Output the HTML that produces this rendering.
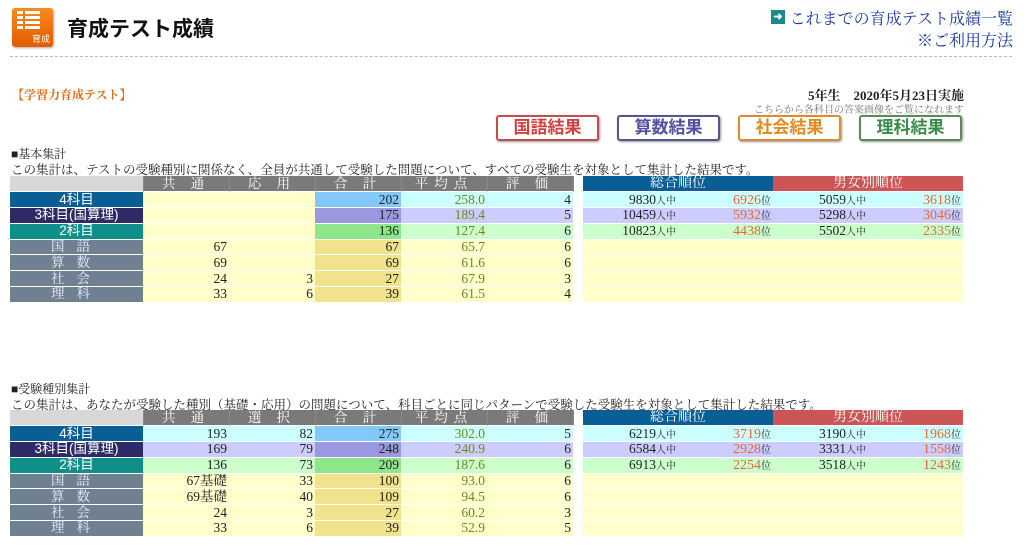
<!DOCTYPE html>
<html><head><meta charset="utf-8"><style>
*{margin:0;padding:0;box-sizing:border-box}
body{width:1024px;height:557px;background:#fff;position:relative;overflow:hidden;font-family:"Liberation Serif","Noto Serif CJK JP",serif;color:#222}
.a{position:absolute}
table{border-collapse:collapse;table-layout:fixed;position:absolute;font-size:13.5px}
td{height:15.8px;line-height:14px;padding:0 2px;white-space:nowrap;text-align:right;border-bottom:1px solid rgba(255,255,255,.5);overflow:hidden}
.h td{color:#fff;background:#7a7a7a;text-align:center;letter-spacing:6px;border-right:1px solid #8a8a8a}
.h td.e{background:#d8d8d8}
td.l{color:#fff;text-align:center;font-family:"Liberation Sans","Noto Sans CJK JP",sans-serif}
td.s{color:#eef;background:#6f8090;text-align:center;letter-spacing:12px}
.r4 td{background:#ccffff}.r4 td.l{background:#0a5e96}.r4 td.t{background:#82c8f8}
.r3 td{background:#ccccff}.r3 td.l{background:#2e2a66}.r3 td.t{background:#9a98de}
.r2 td{background:#ccffcc}.r2 td.l{background:#0f8f8a}.r2 td.t{background:#8ee68a}
.ry td{background:#ffffcc}.ry td.t{background:#f1e28c}.ry td.s{background:#6f8090}
td.g{color:#6a8a20}
.rk td{text-align:right}
.rk .h2 td{color:#fff;text-align:center;font-size:14px}
.rk .h2 td.b{background:#0a5e96}.rk .h2 td.c{background:#cc5555}
.o{color:#e06a3a;font-size:14px;line-height:12px}
small{font-size:10px;line-height:10px}
.btn{position:absolute;top:115px;width:103px;height:26px;border-radius:3px;border:2px solid;font-family:"Liberation Sans","Noto Sans CJK JP",sans-serif;font-size:17px;font-weight:bold;text-align:center;line-height:22px;background:#fff;box-shadow:1px 1px 2px #999}
</style></head><body>
<div class="a" style="left:12px;top:8px;width:41px;height:39px;background:linear-gradient(#f98a20,#e25a00);border-radius:3px;box-shadow:1px 1px 2px #aaa">
<div class="a" style="left:5px;top:3px;width:23px;height:20px;background:repeating-linear-gradient(#fff 0 3px,transparent 3px 5px)"></div>
<div class="a" style="left:11px;top:3px;width:2px;height:20px;background:#f07a10"></div>
<div class="a" style="left:20px;top:24px;color:#fff;font-size:9px;font-family:'Noto Sans CJK JP',sans-serif">育成</div></div>
<div class="a" style="left:67px;top:13px;font-size:21px;font-weight:bold;font-family:'Liberation Sans','Noto Sans CJK JP',sans-serif;color:#111">育成テスト成績</div>
<div class="a" style="left:771px;top:10px;width:14px;height:14px;background:#1a8a8a;color:#fff;font-size:11px;line-height:14px;text-align:center;font-family:sans-serif;font-weight:bold">➜</div>
<div class="a" style="right:11px;top:6px;font-size:16px;color:#1a3a9a">これまでの育成テスト成績一覧</div>
<div class="a" style="right:11px;top:28px;font-size:16px;color:#1a3a9a">※ご利用方法</div>
<div class="a" style="left:10px;top:56px;width:1002px;border-top:1px dashed #bbb"></div>
<div class="a" style="left:12px;top:86px;font-size:12px;color:#e06a10;font-weight:bold">【学習力育成テスト】</div>
<div class="a" style="right:60px;top:85px;font-size:13px;font-weight:bold">5年生　2020年5月23日実施</div>
<div class="a" style="right:60px;top:101px;font-size:10px;color:#777">こちらから各科目の答案画像をご覧になれます</div>
<div class="btn" style="left:496px;border-color:#c05050;color:#d04040">国語結果</div>
<div class="btn" style="left:617px;border-color:#555590;color:#5050a0">算数結果</div>
<div class="btn" style="left:738px;border-color:#e08a30;color:#e08a20">社会結果</div>
<div class="btn" style="left:859px;border-color:#5a8a5a;color:#3a8a4a">理科結果</div>

<div class="a" style="left:11px;top:145px;font-size:12px">■基本集計</div>
<div class="a" style="left:11px;top:160px;font-size:12.5px">この集計は、テストの受験種別に関係なく、全員が共通して受験した問題について、すべての受験生を対象として集計した結果です。</div>
<table style="left:10px;top:176px;width:563px">
<col style="width:133px"><col style="width:86px"><col style="width:86px"><col style="width:86px"><col style="width:86px"><col style="width:86px">
<tr class="h"><td class="e"></td><td>共 通</td><td>応 用</td><td>合 計</td><td>平均点</td><td>評 価</td></tr>
<tr class="r4"><td class="l">4科目</td><td style="background:#ffffcc"></td><td style="background:#ffffcc"></td><td class="t">202</td><td class="g">258.0</td><td>4</td></tr>
<tr class="r3"><td class="l">3科目(国算理)</td><td style="background:#ffffcc"></td><td style="background:#ffffcc"></td><td class="t">175</td><td class="g">189.4</td><td>5</td></tr>
<tr class="r2"><td class="l">2科目</td><td style="background:#ffffcc"></td><td style="background:#ffffcc"></td><td class="t">136</td><td class="g">127.4</td><td>6</td></tr>
<tr class="ry"><td class="s">国語</td><td>67</td><td></td><td class="t">67</td><td class="g">65.7</td><td>6</td></tr>
<tr class="ry"><td class="s">算数</td><td>69</td><td></td><td class="t">69</td><td class="g">61.6</td><td>6</td></tr>
<tr class="ry"><td class="s">社会</td><td>24</td><td>3</td><td class="t">27</td><td class="g">67.9</td><td>3</td></tr>
<tr class="ry"><td class="s">理科</td><td>33</td><td>6</td><td class="t">39</td><td class="g">61.5</td><td>4</td></tr>
</table>
<table class="rk" style="left:583px;top:176px;width:380px">
<col style="width:95px"><col style="width:95px"><col style="width:95px"><col style="width:95px">
<tr class="h2"><td class="b" colspan="2">総合順位</td><td class="c" colspan="2">男女別順位</td></tr>
<tr class="r4"><td>9830<small>人中</small></td><td><span class="o">6926</span><small>位</small></td><td>5059<small>人中</small></td><td><span class="o">3618</span><small>位</small></td></tr>
<tr class="r3"><td>10459<small>人中</small></td><td><span class="o">5932</span><small>位</small></td><td>5298<small>人中</small></td><td><span class="o">3046</span><small>位</small></td></tr>
<tr class="r2"><td>10823<small>人中</small></td><td><span class="o">4438</span><small>位</small></td><td>5502<small>人中</small></td><td><span class="o">2335</span><small>位</small></td></tr>
<tr class="ry"><td></td><td></td><td></td><td></td></tr><tr class="ry"><td></td><td></td><td></td><td></td></tr><tr class="ry"><td></td><td></td><td></td><td></td></tr><tr class="ry"><td></td><td></td><td></td><td></td></tr>
</table>

<div class="a" style="left:11px;top:380px;font-size:12px">■受験種別集計</div>
<div class="a" style="left:11px;top:395px;font-size:12.5px">この集計は、あなたが受験した種別（基礎・応用）の問題について、科目ごとに同じパターンで受験した受験生を対象として集計した結果です。</div>
<table style="left:10px;top:410px;width:563px">
<col style="width:133px"><col style="width:86px"><col style="width:86px"><col style="width:86px"><col style="width:86px"><col style="width:86px">
<tr class="h"><td class="e"></td><td>共 通</td><td>選 択</td><td>合 計</td><td>平均点</td><td>評 価</td></tr>
<tr class="r4"><td class="l">4科目</td><td>193</td><td>82</td><td class="t">275</td><td class="g">302.0</td><td>5</td></tr>
<tr class="r3"><td class="l">3科目(国算理)</td><td>169</td><td>79</td><td class="t">248</td><td class="g">240.9</td><td>6</td></tr>
<tr class="r2"><td class="l">2科目</td><td>136</td><td>73</td><td class="t">209</td><td class="g">187.6</td><td>6</td></tr>
<tr class="ry"><td class="s">国語</td><td>67基礎</td><td>33</td><td class="t">100</td><td class="g">93.0</td><td>6</td></tr>
<tr class="ry"><td class="s">算数</td><td>69基礎</td><td>40</td><td class="t">109</td><td class="g">94.5</td><td>6</td></tr>
<tr class="ry"><td class="s">社会</td><td>24</td><td>3</td><td class="t">27</td><td class="g">60.2</td><td>3</td></tr>
<tr class="ry"><td class="s">理科</td><td>33</td><td>6</td><td class="t">39</td><td class="g">52.9</td><td>5</td></tr>
</table>
<table class="rk" style="left:583px;top:410px;width:380px">
<col style="width:95px"><col style="width:95px"><col style="width:95px"><col style="width:95px">
<tr class="h2"><td class="b" colspan="2">総合順位</td><td class="c" colspan="2">男女別順位</td></tr>
<tr class="r4"><td>6219<small>人中</small></td><td><span class="o">3719</span><small>位</small></td><td>3190<small>人中</small></td><td><span class="o">1968</span><small>位</small></td></tr>
<tr class="r3"><td>6584<small>人中</small></td><td><span class="o">2928</span><small>位</small></td><td>3331<small>人中</small></td><td><span class="o">1558</span><small>位</small></td></tr>
<tr class="r2"><td>6913<small>人中</small></td><td><span class="o">2254</span><small>位</small></td><td>3518<small>人中</small></td><td><span class="o">1243</span><small>位</small></td></tr>
<tr class="ry"><td></td><td></td><td></td><td></td></tr><tr class="ry"><td></td><td></td><td></td><td></td></tr><tr class="ry"><td></td><td></td><td></td><td></td></tr><tr class="ry"><td></td><td></td><td></td><td></td></tr>
</table>
</body></html>
